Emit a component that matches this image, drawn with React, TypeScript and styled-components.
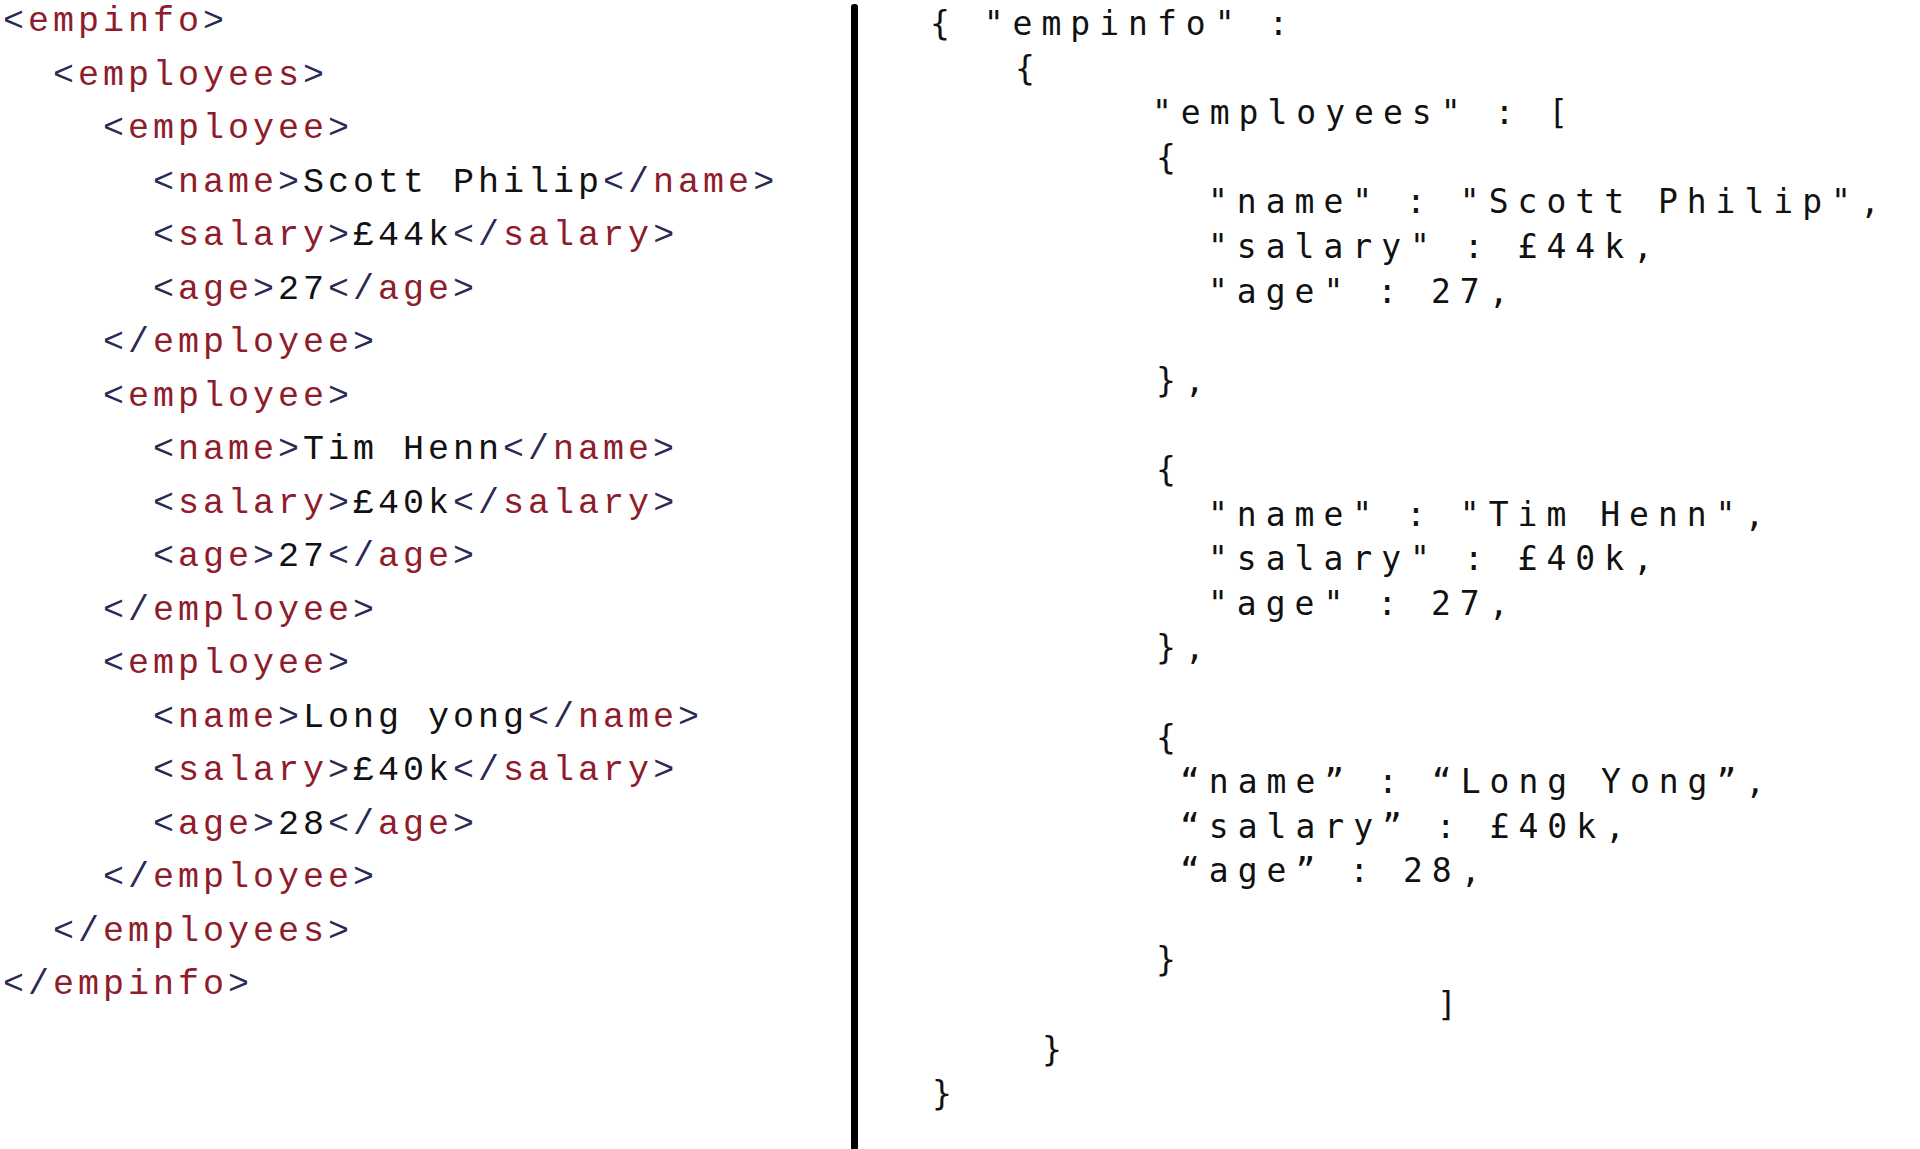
import React from 'react';
import styled, { createGlobalStyle } from 'styled-components';

const GlobalStyle = createGlobalStyle`
  html, body {
    margin: 0;
    padding: 0;
    background: #ffffff;
  }
  body {
    font-family: "Liberation Sans", Arial, sans-serif;
  }
`;

const Page = styled.div`
  display: flex;
  width: 1920px;
  height: 1149px;
  background: #ffffff;
  overflow: hidden;
`;

const XmlPane = styled.div`
  width: 851px;
  flex-shrink: 0;
  display: flex;
  flex-direction: column;
  gap: 13.5px;
  padding-top: 2px;
  font-family: "Liberation Mono", "Courier New", monospace;
  font-size: 35px;
  letter-spacing: 4px;
  line-height: 40px;
  white-space: pre;
`;

const XmlLine = styled.div<{ $level: number }>`
  padding-left: ${(p) => 3 + p.$level * 50}px;
`;

const Punct = styled.span`
  color: #2a2a55;
`;

const TagName = styled.span`
  color: #8e1c2b;
`;

const Value = styled.span`
  color: #111111;
`;

const Divider = styled.div`
  width: 7px;
  flex-shrink: 0;
  margin-top: 4px;
  background: #000000;
  border-radius: 3px 3px 0 0;
`;

const JsonPane = styled.div`
  flex: 1;
  display: flex;
  flex-direction: column;
  padding-top: 2px;
  padding-left: 72px;
  font-family: "DejaVu Sans Mono", monospace;
  font-size: 33px;
  letter-spacing: 9px;
  word-spacing: -4px;
  line-height: 44.6px;
  color: #111111;
  white-space: pre;
`;

const JsonLine = styled.div<{ $indent: number }>`
  padding-left: ${(p) => p.$indent}px;
  min-height: 44.6px;
`;

type Emp = { name: string; salary: string; age: string };

const employees: Emp[] = [
  { name: 'Scott Philip', salary: '£44k', age: '27' },
  { name: 'Tim Henn', salary: '£40k', age: '27' },
  { name: 'Long yong', salary: '£40k', age: '28' },
];

const Open = ({ name }: { name: string }) => (
  <>
    <Punct>&lt;</Punct>
    <TagName>{name}</TagName>
    <Punct>&gt;</Punct>
  </>
);

const Close = ({ name }: { name: string }) => (
  <>
    <Punct>&lt;/</Punct>
    <TagName>{name}</TagName>
    <Punct>&gt;</Punct>
  </>
);

const Field = ({ tag, value }: { tag: string; value: string }) => (
  <XmlLine $level={3}>
    <Open name={tag} />
    <Value>{value}</Value>
    <Close name={tag} />
  </XmlLine>
);

const XmlView = () => (
  <XmlPane>
    <XmlLine $level={0}>
      <Open name="empinfo" />
    </XmlLine>
    <XmlLine $level={1}>
      <Open name="employees" />
    </XmlLine>
    {employees.map((e) => (
      <React.Fragment key={e.name}>
        <XmlLine $level={2}>
          <Open name="employee" />
        </XmlLine>
        <Field tag="name" value={e.name} />
        <Field tag="salary" value={e.salary} />
        <Field tag="age" value={e.age} />
        <XmlLine $level={2}>
          <Close name="employee" />
        </XmlLine>
      </React.Fragment>
    ))}
    <XmlLine $level={1}>
      <Close name="employees" />
    </XmlLine>
    <XmlLine $level={0}>
      <Close name="empinfo" />
    </XmlLine>
  </XmlPane>
);

const jsonLines: { indent: number; text: string }[] = [
  { indent: 0, text: '{ "empinfo" :' },
  { indent: 85, text: '{' },
  { indent: 222, text: '"employees" : [' },
  { indent: 226, text: '{' },
  { indent: 278, text: '"name" : "Scott Philip",' },
  { indent: 278, text: '"salary" : £44k,' },
  { indent: 278, text: '"age" : 27,' },
  { indent: 0, text: '' },
  { indent: 226, text: '},' },
  { indent: 0, text: '' },
  { indent: 226, text: '{' },
  { indent: 278, text: '"name" : "Tim Henn",' },
  { indent: 278, text: '"salary" : £40k,' },
  { indent: 278, text: '"age" : 27,' },
  { indent: 226, text: '},' },
  { indent: 0, text: '' },
  { indent: 226, text: '{' },
  { indent: 250, text: '\u201Cname\u201D : \u201CLong Yong\u201D,' },
  { indent: 250, text: '\u201Csalary\u201D : £40k,' },
  { indent: 250, text: '\u201Cage\u201D : 28,' },
  { indent: 0, text: '' },
  { indent: 226, text: '}' },
  { indent: 507, text: ']' },
  { indent: 112, text: '}' },
  { indent: 2, text: '}' },
];

const JsonView = () => (
  <JsonPane>
    {jsonLines.map((l, i) => (
      <JsonLine key={i} $indent={l.indent}>
        {l.text}
      </JsonLine>
    ))}
  </JsonPane>
);

export default function App() {
  return (
    <>
      <GlobalStyle />
      <Page>
        <XmlView />
        <Divider />
        <JsonView />
      </Page>
    </>
  );
}
